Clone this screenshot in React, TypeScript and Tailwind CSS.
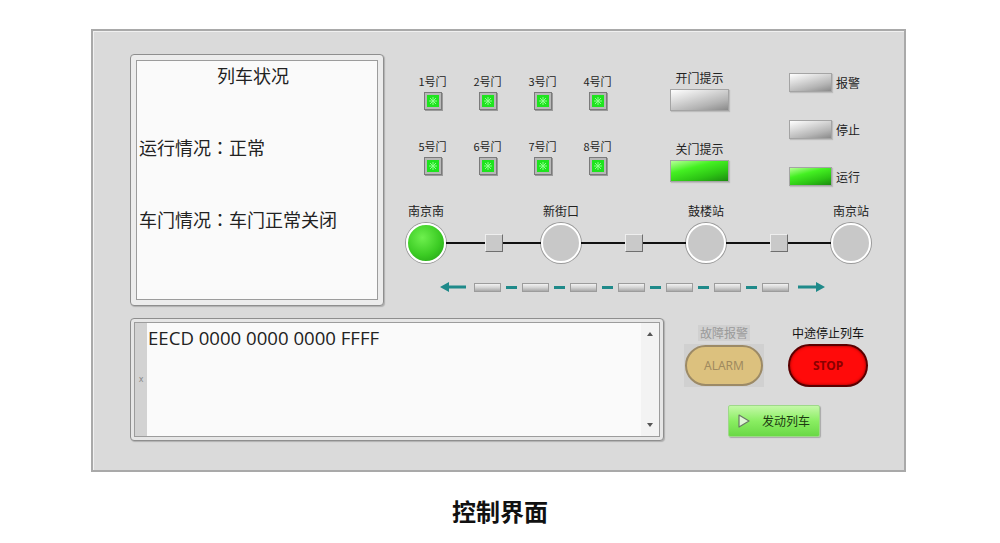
import React from "react";

const FONT = '"Noto Sans CJK SC", "Noto Sans", sans-serif';

const doors = ["1号门", "2号门", "3号门", "4号门", "5号门", "6号门", "7号门", "8号门"];

function Colon() {
  return <span style={{ fontFamily: '"Noto Sans CJK TC", sans-serif' }}>：</span>;
}

function DoorLed() {
  return (
    <div className="w-[18px] h-[18px] border border-[#7a7a7a] bg-[#b8b8b8] p-[2px] shadow-[1px_1px_0_#9a9a9a]">
      <div className="w-full h-full bg-[#1ee41e] flex items-center justify-center">
        <svg width="10" height="10" viewBox="0 0 10 10">
          <g stroke="#8cff8c" strokeWidth="1">
            <line x1="5" y1="1" x2="5" y2="9" />
            <line x1="1" y1="5" x2="9" y2="5" />
            <line x1="2" y1="2" x2="8" y2="8" />
            <line x1="8" y1="2" x2="2" y2="8" />
          </g>
        </svg>
      </div>
    </div>
  );
}

function Lamp({ on, w, h }: { on?: boolean; w: string; h: string }) {
  return (
    <div
      className={`${w} ${h} border border-[#a4a4a4] shadow-[1px_1px_1px_#bdbdbd] ${
        on
          ? "bg-[linear-gradient(165deg,#b6ff96_0%,#44f022_35%,#2cc414_70%,#1c8c10_100%)]"
          : "bg-[linear-gradient(165deg,#ffffff_0%,#dadada_35%,#b4b4b4_70%,#8a8a8a_100%)]"
      }`}
    />
  );
}

function Station({ name, on }: { name: string; on?: boolean }) {
  return (
    <div className="w-[40px] flex flex-col items-center">
      <div className="h-[16px] text-[12px] leading-[16px] whitespace-nowrap text-[#222]">{name}</div>
      <div
        className={`mt-[4px] w-[40px] h-[40px] rounded-full border-2 border-white shadow-[0_0_0_1px_#9a9a9a] ${
          on
            ? "bg-[radial-gradient(circle_at_40%_35%,#6ef04e_0%,#3ccc24_55%,#1e9a12_100%)]"
            : "bg-[#c8c8c8]"
        }`}
      />
    </div>
  );
}

function Link({ w }: { w: string }) {
  return (
    <div className={`${w} h-[40px] mt-[20px] relative flex items-center justify-center`}>
      <div className="absolute left-0 right-0 top-[19px] h-[2px] bg-[#111]" />
      <div className="relative w-[18px] h-[18px] bg-[#c9c9c9] border border-t-[#eeeeee] border-l-[#eeeeee] border-r-[#6f6f6f] border-b-[#6f6f6f]" />
    </div>
  );
}

function Bar() {
  return (
    <div className="w-[27px] h-[9px] border border-[#9c9c9c] bg-[linear-gradient(180deg,#f2f2f2_0%,#d4d4d4_50%,#a8a8a8_100%)]" />
  );
}

function Dash() {
  return (
    <div className="w-[21px] flex justify-center">
      <div className="w-[11px] h-[3px] bg-[#1f8a8a]" />
    </div>
  );
}

export default function App() {
  return (
    <div className="w-[1000px] h-[543px] bg-white overflow-hidden" style={{ fontFamily: FONT }}>
      <div className="pl-[91px] pt-[29px]">
        <div className="w-[815px] h-[443px] border-2 border-[#a9a9a9] bg-[#dadada] shadow-[inset_1px_1px_0_#f0f0f0] pl-[37px] pt-[23px]">
          {/* top row */}
          <div className="flex">
            <div className="w-[254px] h-[252px] rounded-[4px] border border-[#8e8e8e] bg-[#ececec] p-[5px] shadow-[1px_1px_1px_#b0b0b0]">
              <div className="w-full h-full border border-[#9c9c9c] bg-[#fafafa] pl-[2px] pt-[2px] text-[18px] leading-[24px] text-[#222]">
                <div className="text-center pr-[10px]">列车状况</div>
                <div className="mt-[48px]">运行情况<Colon />正常</div>
                <div className="mt-[48px]">车门情况<Colon />车门正常关闭</div>
              </div>
            </div>

            <div className="ml-[21px] flex flex-col">
              <div className="h-[149px] flex items-start">
                <div className="mt-[20px] grid grid-cols-4 gap-y-[29px]">
                  {doors.map((d) => (
                    <div key={d} className="w-[55px] flex flex-col items-center">
                      <div className="h-[14px] text-[11px] leading-[14px] text-[#222]">{d}</div>
                      <div className="mt-[4px]">
                        <DoorLed />
                      </div>
                    </div>
                  ))}
                </div>

                <div className="ml-[45px] mt-[16px] w-[59px] flex flex-col items-center">
                  <div className="h-[16px] text-[12px] leading-[16px] whitespace-nowrap text-[#222]">开门提示</div>
                  <div className="mt-[3px]">
                    <Lamp w="w-[59px]" h="h-[22px]" />
                  </div>
                  <div className="mt-[30px] h-[16px] text-[12px] leading-[16px] whitespace-nowrap text-[#222]">关门提示</div>
                  <div className="mt-[3px]">
                    <Lamp on w="w-[59px]" h="h-[22px]" />
                  </div>
                </div>

                <div className="ml-[60px] mt-[19px] flex flex-col gap-[28px]">
                  {[
                    ["报警", false],
                    ["停止", false],
                    ["运行", true],
                  ].map(([t, on]) => (
                    <div key={t as string} className="flex items-center gap-[4px]">
                      <Lamp on={on as boolean} w="w-[43px]" h="h-[19px]" />
                      <span className="text-[12px] leading-[16px] text-[#222]">{t as string}</span>
                    </div>
                  ))}
                </div>
              </div>

              {/* stations */}
              <div className="ml-[1px] flex">
                <Station name="南京南" on />
                <Link w="w-[95px]" />
                <Station name="新街口" />
                <Link w="w-[105px]" />
                <Station name="鼓楼站" />
                <Link w="w-[105px]" />
                <Station name="南京站" />
              </div>

              {/* direction row */}
              <div className="ml-[35px] mt-[19px] flex items-center">
                <svg width="26" height="10" viewBox="0 0 26 10">
                  <path d="M0 5 L9 0 L9 3.5 L26 3.5 L26 6.5 L9 6.5 L9 10 Z" fill="#1f8a8a" />
                </svg>
                <div className="w-[8px]" />
                <Bar />
                <Dash />
                <Bar />
                <Dash />
                <Bar />
                <Dash />
                <Bar />
                <Dash />
                <Bar />
                <Dash />
                <Bar />
                <Dash />
                <Bar />
                <div className="w-[9px]" />
                <svg width="27" height="10" viewBox="0 0 27 10">
                  <path d="M27 5 L18 0 L18 3.5 L0 3.5 L0 6.5 L18 6.5 L18 10 Z" fill="#1f8a8a" />
                </svg>
              </div>
            </div>
          </div>

          {/* bottom row */}
          <div className="mt-[12px] flex">
            <div className="w-[534px] h-[123px] rounded-[4px] border border-[#8e8e8e] bg-[#e6e6e6] p-[3px] shadow-[1px_1px_1px_#b0b0b0]">
              <div className="w-full h-full border border-[#9c9c9c] flex">
                <div className="w-[12px] bg-[#d2d2d2] flex items-center justify-center text-[8px] text-[#8a8a8a]" style={{ fontFamily: '"DejaVu Sans", sans-serif' }}>x</div>
                <div className="flex-1 bg-[#fafafa] pl-[1px] pt-[4px] text-[18.6px] leading-[22px] text-[#222]" style={{ fontFamily: '"Open Sans", "Noto Sans", sans-serif' }}>
                  EECD 0000 0000 0000 FFFF
                </div>
                <div className="w-[18px] bg-[#f3f3f3] flex flex-col items-center justify-between py-[9px]">
                  <svg width="6" height="4" viewBox="0 0 6 4"><path d="M3 0 L6 4 L0 4 Z" fill="#555" /></svg>
                  <svg width="6" height="4" viewBox="0 0 6 4"><path d="M0 0 L6 0 L3 4 Z" fill="#555" /></svg>
                </div>
              </div>
            </div>

            <div className="flex flex-col">
              <div className="flex mt-[7px]">
                <div className="ml-[20px] w-[80px] flex flex-col items-center">
                  <div className="h-[16px] px-[2px] bg-[#d0d0d0] text-[12px] leading-[16px] text-[#9a9a9a] whitespace-nowrap">故障报警</div>
                  <div className="mt-[3px] w-[80px] h-[43px] bg-[#d0d0d0] flex items-center justify-center">
                    <div className="w-[78px] h-[41px] rounded-full border-2 border-[#9c8a66] bg-[#dcc17e] flex items-center justify-center text-[12px] text-[#a08a5e]" style={{ fontFamily: '"Noto Sans", sans-serif' }}>
                      ALARM
                    </div>
                  </div>
                </div>
                <div className="ml-[24px] w-[80px] flex flex-col items-center">
                  <div className="h-[16px] text-[12px] leading-[16px] text-[#111] whitespace-nowrap">中途停止列车</div>
                  <div className="mt-[3px] w-[80px] h-[43px] rounded-full border-2 border-[#5a0000] bg-[#ff0a0a] shadow-[inset_0_0_3px_#900000] flex items-center justify-center text-[12px] font-bold text-[#8a0000]" style={{ fontFamily: '"Noto Sans", sans-serif' }}>
                    STOP
                  </div>
                </div>
              </div>
              <div className="ml-[64px] mt-[18px] w-[92px] h-[32px] rounded-[2px] border border-[#9ed889] bg-[linear-gradient(180deg,#c4f8a8_0%,#8aee62_50%,#6ad846_100%)] shadow-[1px_1px_1px_#a8a8a8] flex items-center pl-[9px] gap-[12px]">
                <svg width="12" height="14" viewBox="0 0 12 14">
                  <path d="M1 1 L11 7 L1 13 Z" fill="#dff5d6" stroke="#6a7a66" strokeWidth="1.2" strokeLinejoin="round" />
                </svg>
                <span className="text-[12px] leading-[16px] text-[#1d3a12]">发动列车</span>
              </div>
            </div>
          </div>
        </div>
      </div>

      <div className="mt-[23px] text-center text-[24px] leading-[32px] font-bold text-[#111]">控制界面</div>
    </div>
  );
}
